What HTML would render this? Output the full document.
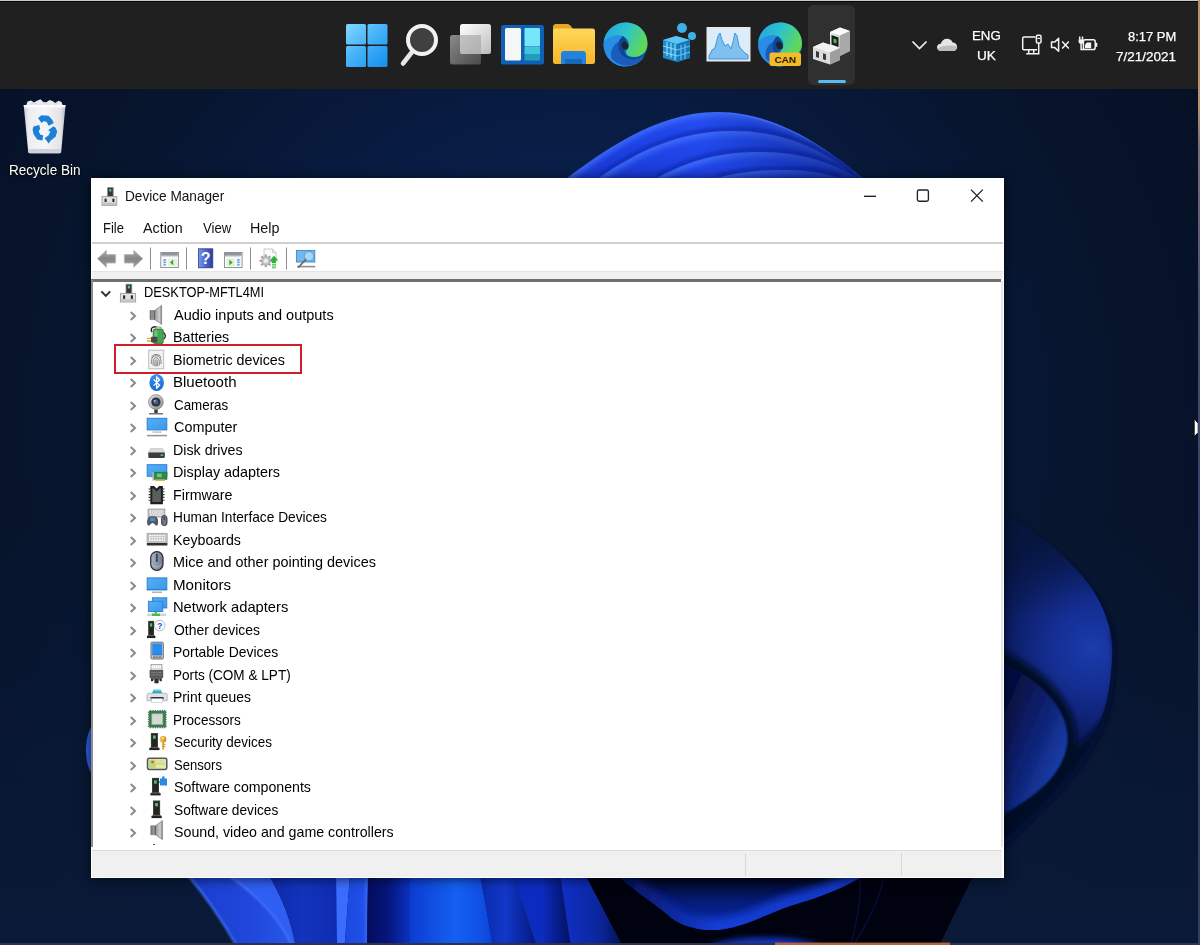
<!DOCTYPE html>
<html lang="en">
<head>
<meta charset="utf-8">
<title>Device Manager</title>
<style>
*{box-sizing:border-box;margin:0;padding:0}
html,body{width:1200px;height:945px;overflow:hidden;background:#06173a}
body{position:relative;font-family:"Liberation Sans",sans-serif;color:#000}
.abs{position:absolute}
.ft{position:absolute;line-height:1;white-space:nowrap;transform-origin:0 50%;z-index:5}
#wall{position:absolute;left:0;top:0;width:1200px;height:945px}
/* taskbar */
#taskbar{position:absolute;left:0;top:0;width:1200px;height:88.5px;background:#202020;border-top:1px solid #c8c8c8;box-shadow:inset 0 1px 0 #060606}
#activebtn{position:absolute;left:808px;top:4px;width:47px;height:80px;background:#303030;border-radius:6px}
#activeind{position:absolute;left:817.5px;top:78.5px;width:28px;height:3.5px;background:#56bdf2;border-radius:2px}
.tray{position:absolute;color:#fff;font-size:13.5px;white-space:nowrap;transform-origin:0 0}
/* desktop icon */
#rblabel{position:absolute;left:9px;top:160px;color:#fff;font-size:15px;white-space:nowrap;transform-origin:0 0;text-shadow:0 1px 2px rgba(0,0,0,.9)}
/* window */
#win{position:absolute;left:91px;top:178px;width:913px;height:700px;background:#fff;border:1px solid #fff;box-shadow:0 1px 10px 1px rgba(0,0,0,.55)}
#title{position:absolute;left:34px;top:9px;font-size:15px;white-space:nowrap;transform-origin:0 50%}
.menu{position:absolute;top:41px;font-size:14.5px;white-space:nowrap;transform-origin:0 50%}
#menuline{position:absolute;left:0;top:63.2px;width:911px;height:1.8px;background:#cfcfcf}
#tbband{position:absolute;left:0;top:92px;width:911px;height:9px;background:#f0f0f0;border-top:1px solid #e4e4e4}
#treetop{position:absolute;left:-1px;top:100.4px;width:910px;height:2.2px;background:#6f6f6f}
#treeleft{position:absolute;left:-1px;top:101px;width:2.4px;height:567px;background:#8c8c8c}
#treeright{position:absolute;left:909px;top:102px;width:1.5px;height:566px;background:#e6e6e6}
#status{position:absolute;left:0;top:671px;width:909.5px;height:26.6px;background:#f0f0f0;border-top:1px solid #dcdcdc}
.sdiv{position:absolute;top:2px;width:1px;height:23px;background:#d7d7d7}
.row{position:absolute;left:0;height:22px;width:600px}
.row .lbl{position:absolute;left:82px;top:0;height:22px;line-height:22px;font-size:14.5px;white-space:nowrap;transform-origin:0 50%;color:#000}
.row .chev{position:absolute;left:36px;top:5px;width:10px;height:12px}
.row .ico{position:absolute;left:55px;top:0;width:22px;height:22px;overflow:visible}
#hl{position:absolute;left:22.3px;top:165.3px;width:187.4px;height:30.1px;border:2.7px solid #cf1f2b}
</style>
</head>
<body>
<svg id="wall" viewBox="0 0 1200 945">
<defs>
<radialGradient id="bgG" gradientUnits="userSpaceOnUse" cx="570" cy="420" r="700"><stop offset="0" stop-color="#0c2556"/><stop offset="0.3" stop-color="#0a204c"/><stop offset="0.5" stop-color="#081a3e"/><stop offset="0.72" stop-color="#07152e"/><stop offset="1" stop-color="#061126"/></radialGradient>
</defs>
<rect width="1200" height="945" fill="url(#bgG)"/>
<linearGradient id="bgV" x1="0" y1="0" x2="0" y2="1"><stop offset="0" stop-color="#0b1f42" stop-opacity="0"/><stop offset="0.55" stop-color="#0b1f42" stop-opacity="0"/><stop offset="1" stop-color="#0a1c3c" stop-opacity="0.8"/></linearGradient>
<rect width="1200" height="945" fill="url(#bgV)"/>
<defs>
<filter id="b1" x="-20%" y="-20%" width="140%" height="140%"><feGaussianBlur stdDeviation="1"/></filter>
<filter id="b3" x="-20%" y="-20%" width="140%" height="140%"><feGaussianBlur stdDeviation="3"/></filter>
<filter id="b8" x="-30%" y="-30%" width="160%" height="160%"><feGaussianBlur stdDeviation="8"/></filter>
<filter id="b30" x="-50%" y="-50%" width="200%" height="200%"><feGaussianBlur stdDeviation="30"/></filter>
<linearGradient id="pt1" gradientUnits="userSpaceOnUse" x1="0" y1="111" x2="0" y2="180"><stop offset="0" stop-color="#2a54f4"/><stop offset="0.3" stop-color="#2046ea"/><stop offset="1" stop-color="#1836ce"/></linearGradient>
<linearGradient id="pt2" gradientUnits="userSpaceOnUse" x1="0" y1="130" x2="0" y2="180"><stop offset="0" stop-color="#2a54f4"/><stop offset="0.4" stop-color="#2046ea"/><stop offset="1" stop-color="#1938d2"/></linearGradient>
<linearGradient id="pt3" gradientUnits="userSpaceOnUse" x1="0" y1="151" x2="0" y2="180"><stop offset="0" stop-color="#2a54f4"/><stop offset="0.6" stop-color="#2046ea"/><stop offset="1" stop-color="#1b3cd8"/></linearGradient>
<linearGradient id="pt4" gradientUnits="userSpaceOnUse" x1="0" y1="169" x2="0" y2="182"><stop offset="0" stop-color="#2a54f4"/><stop offset="1" stop-color="#2046e6"/></linearGradient>
<linearGradient id="ptdark" gradientUnits="userSpaceOnUse" x1="700" y1="0" x2="870" y2="0"><stop offset="0" stop-color="#061a7a" stop-opacity="0"/><stop offset="1" stop-color="#05146a" stop-opacity="0.7"/></linearGradient>
<radialGradient id="bulge" gradientUnits="userSpaceOnUse" cx="1092" cy="648" r="118"><stop offset="0" stop-color="#1b3cac"/><stop offset="0.35" stop-color="#142e92"/><stop offset="0.75" stop-color="#0b1c62"/><stop offset="1" stop-color="#07144a"/></radialGradient>
<linearGradient id="bulgeTop" gradientUnits="userSpaceOnUse" x1="1010" y1="500" x2="1050" y2="610"><stop offset="0" stop-color="#061634" stop-opacity="0.95"/><stop offset="1" stop-color="#07193a" stop-opacity="0"/></linearGradient>
<linearGradient id="bulge2" gradientUnits="userSpaceOnUse" x1="1000" y1="715" x2="1068" y2="745"><stop offset="0" stop-color="#061040"/><stop offset="0.55" stop-color="#0c2274"/><stop offset="1" stop-color="#1a3ca6"/></linearGradient>
<linearGradient id="botA" gradientUnits="userSpaceOnUse" x1="180" y1="0" x2="980" y2="0">
<stop offset="0" stop-color="#1a3ed0"/><stop offset="0.1" stop-color="#2450e6"/><stop offset="0.135" stop-color="#2f60f4"/><stop offset="0.145" stop-color="#1030b4"/><stop offset="0.19" stop-color="#1030b8"/><stop offset="0.197" stop-color="#3a6cff"/><stop offset="0.21" stop-color="#3766fa"/><stop offset="0.215" stop-color="#1d4ce4"/><stop offset="0.235" stop-color="#1a46dc"/><stop offset="0.24" stop-color="#050f6c"/><stop offset="0.28" stop-color="#07188a"/><stop offset="0.33" stop-color="#0f48e0"/><stop offset="0.36" stop-color="#1258ee"/><stop offset="0.38" stop-color="#0e44dc"/><stop offset="0.385" stop-color="#0a2ab0"/><stop offset="0.41" stop-color="#1238c8"/><stop offset="0.425" stop-color="#061a84"/><stop offset="0.45" stop-color="#0c2cc0"/><stop offset="0.475" stop-color="#05126a"/><stop offset="0.49" stop-color="#1030c8"/><stop offset="0.52" stop-color="#0a249c"/><stop offset="0.55" stop-color="#020830"/><stop offset="1" stop-color="#00020f"/></linearGradient>
<linearGradient id="swG" gradientUnits="userSpaceOnUse" x1="760" y1="880" x2="775" y2="925"><stop offset="0" stop-color="#03104a"/><stop offset="0.6" stop-color="#0b2cb0"/><stop offset="1" stop-color="#1440e0"/></linearGradient>
</defs>
<!-- soft glow around bloom -->
<!-- top petals -->
<clipPath id="cp1"><path d="M560,184 L567,178 C600,154 655,112 717,112 C780,112 830,152 863,178 L870,184 Z"/></clipPath>
<path d="M560,184 L567,178 C600,154 655,112 717,112 C780,112 830,152 863,178 L870,184 Z" fill="url(#pt1)"/>
<g clip-path="url(#cp1)"><path d="M567,178 C600,154 655,112 717,112 C780,112 830,152 863,178" fill="none" stroke="#4d7dff" stroke-width="6" opacity="0.85" filter="url(#b3)"/></g>
<clipPath id="cp2"><path d="M590,184 L600,177 C640,150 680,131 733,131 C785,131 820,150 850,171 L862,184 Z"/></clipPath>
<path d="M600,177 C640,150 680,131 733,131 C785,131 820,150 850,171" fill="none" stroke="#0f28a8" stroke-width="5" opacity="0.5" filter="url(#b1)" transform="translate(0,-2)" clip-path="url(#cp1)"/>
<path d="M590,184 L600,177 C640,150 680,131 733,131 C785,131 820,150 850,171 L862,184 Z" fill="url(#pt2)"/>
<g clip-path="url(#cp2)"><path d="M600,177 C640,150 680,131 733,131 C785,131 820,150 850,171" fill="none" stroke="#4d7dff" stroke-width="6" opacity="0.85" filter="url(#b3)"/></g>
<clipPath id="cp3"><path d="M648,184 L657,178 C690,160 720,152 760,152 C800,152 830,162 856,177 L862,184 Z"/></clipPath>
<path d="M657,178 C690,160 720,152 760,152 C800,152 830,162 856,177" fill="none" stroke="#0f28a8" stroke-width="5" opacity="0.5" filter="url(#b1)" transform="translate(0,-2)" clip-path="url(#cp2)"/>
<path d="M648,184 L657,178 C690,160 720,152 760,152 C800,152 830,162 856,177 L862,184 Z" fill="url(#pt3)"/>
<g clip-path="url(#cp3)"><path d="M657,178 C690,160 720,152 760,152 C800,152 830,162 856,177" fill="none" stroke="#4d7dff" stroke-width="6" opacity="0.85" filter="url(#b3)"/></g>
<clipPath id="cp4"><path d="M708,184 L717,178 C740,172 760,170 783,170 C806,170 824,173 840,178 L846,184 Z"/></clipPath>
<path d="M717,178 C740,172 760,170 783,170 C806,170 824,173 840,178" fill="none" stroke="#0f28a8" stroke-width="5" opacity="0.5" filter="url(#b1)" transform="translate(0,-2)" clip-path="url(#cp3)"/>
<path d="M708,184 L717,178 C740,172 760,170 783,170 C806,170 824,173 840,178 L846,184 Z" fill="url(#pt4)"/>
<g clip-path="url(#cp4)"><path d="M717,178 C740,172 760,170 783,170 C806,170 824,173 840,178" fill="none" stroke="#4d7dff" stroke-width="6" opacity="0.85" filter="url(#b3)"/></g>
<path d="M700,184 L700,112 C780,112 830,152 863,178 L870,184 Z" fill="url(#ptdark)"/>
<!-- right bulge -->
<path d="M1000,511 C1025,525 1048,542 1063,556 C1082,574 1095,590 1102,607 C1110,625 1113,642 1112,658 C1111,680 1108,700 1102,717 C1095,735 1085,752 1072,768 C1058,786 1042,803 1025,819 C1018,826 1010,834 1000,842 Z" fill="#030a30" transform="translate(3,5)" filter="url(#b3)"/>
<path d="M1000,511 C1025,525 1048,542 1063,556 C1082,574 1095,590 1102,607 C1110,625 1113,642 1112,658 C1111,680 1108,700 1102,717 C1095,735 1085,752 1072,768 C1058,786 1042,803 1025,819 C1018,826 1010,834 1000,842 Z" fill="url(#bulge)"/>
<path d="M1000,511 C1025,525 1048,542 1063,556 C1082,574 1095,590 1102,607 C1110,625 1113,642 1112,658 C1111,680 1108,700 1102,717 C1095,735 1085,752 1072,768 C1058,786 1042,803 1025,819 C1018,826 1010,834 1000,842 Z" fill="url(#bulgeTop)"/>
<clipPath id="bulgeClip"><path d="M1000,511 C1025,525 1048,542 1063,556 C1082,574 1095,590 1102,607 C1110,625 1113,642 1112,658 C1111,680 1108,700 1102,717 C1095,735 1085,752 1072,768 C1058,786 1042,803 1025,819 C1018,826 1010,834 1000,842 Z"/></clipPath>
<g clip-path="url(#bulgeClip)">
<path d="M1000,858 C1050,820 1100,760 1118,700 C1124,670 1122,650 1118,630" fill="none" stroke="#050e44" stroke-width="14" filter="url(#b3)"/>
<path d="M1000,650 C1035,664 1082,700 1076,748 L1108,716 L1080,780 L1000,850 Z" fill="#030828" filter="url(#b3)"/>
<path d="M1000,662 C1035,676 1072,708 1067,745 C1062,778 1030,800 1000,816 Z" fill="url(#bulge2)" filter="url(#b1)"/>
</g>
<!-- left sliver -->
<ellipse cx="98" cy="750" rx="12" ry="28" fill="#2e5ee2"/>
<!-- bottom folds -->
<defs><linearGradient id="fA" x1="0" y1="0" x2="1" y2="0"><stop offset="0" stop-color="#1a3ccc"/><stop offset="0.6" stop-color="#2048dc"/><stop offset="1" stop-color="#2c5aee"/></linearGradient><linearGradient id="fC" x1="0" y1="0" x2="1" y2="0"><stop offset="0" stop-color="#0e2aa8"/><stop offset="0.5" stop-color="#1233bc"/><stop offset="1" stop-color="#0e2cb0"/></linearGradient><linearGradient id="fE" x1="0" y1="0" x2="1" y2="0"><stop offset="0" stop-color="#1c48e0"/><stop offset="0.8" stop-color="#2050e8"/><stop offset="1" stop-color="#3c6cfa"/></linearGradient><linearGradient id="fF" x1="0" y1="0" x2="1" y2="0"><stop offset="0" stop-color="#040c5c"/><stop offset="0.5" stop-color="#06167c"/><stop offset="1" stop-color="#0b32c0"/></linearGradient><linearGradient id="fG" x1="0" y1="0" x2="1" y2="0"><stop offset="0" stop-color="#0c3cd0"/><stop offset="0.55" stop-color="#1560f2"/><stop offset="0.9" stop-color="#0f4ce2"/><stop offset="1" stop-color="#0c40d4"/></linearGradient><linearGradient id="fH" x1="0" y1="0" x2="1" y2="0"><stop offset="0" stop-color="#0a2aae"/><stop offset="0.45" stop-color="#1238c8"/><stop offset="1" stop-color="#05167a"/></linearGradient><linearGradient id="fI" x1="0" y1="0" x2="1" y2="0"><stop offset="0" stop-color="#0b2cbc"/><stop offset="0.5" stop-color="#0c2cc0"/><stop offset="1" stop-color="#04105e"/></linearGradient><linearGradient id="fJ" x1="0" y1="0" x2="1" y2="0"><stop offset="0" stop-color="#1030c8"/><stop offset="0.6" stop-color="#0b279e"/><stop offset="1" stop-color="#041050"/></linearGradient></defs>
<path d="M187,874 C205,895 225,925 238,948 L300,948 L240,874 Z" fill="url(#fA)"/>
<path d="M226,874 C262,898 283,925 293,948 L296,948 C292,925 284,900 268,874 Z" fill="#2f5ef2"/>
<path d="M268,874 C284,900 292,925 296,948 L338,948 L336,874 Z" fill="url(#fC)"/>
<path d="M336,874 L350,874 L344.5,948 L337.1,948 Z" fill="#3a6cff"/>
<path d="M350,874 L368,874 L366.9,948 L344.5,948 Z" fill="url(#fE)"/>
<path d="M368,874 L410,874 L410.0,948 L366.9,948 Z" fill="url(#fF)"/>
<path d="M410,874 L480,874 L493.3,948 L410.0,948 Z" fill="url(#fG)"/>
<path d="M480,874 L512,874 L537.4,948 L493.3,948 Z" fill="url(#fH)"/>
<path d="M512,874 L560,874 L571.0,948 L537.4,948 Z" fill="url(#fI)"/>
<path d="M560,874 L585,874 L623.7,948 L571.0,948 Z" fill="url(#fJ)"/>
<path d="M187,874 C205,895 225,925 238,948" fill="none" stroke="#3d6cf2" stroke-width="2.2" filter="url(#b1)"/>
<path d="M226,874 C262,898 283,925 293,948" fill="none" stroke="#4a78ff" stroke-width="1.6" filter="url(#b1)"/>
<!-- dark right section with swoosh -->
<path d="M585,874 L623.7,948 L938,948 L974,874 Z" fill="#00020f"/>
<linearGradient id="swS" gradientUnits="userSpaceOnUse" x1="616" y1="0" x2="866" y2="0"><stop offset="0" stop-color="#04114e"/><stop offset="0.18" stop-color="#0a2490"/><stop offset="0.4" stop-color="#1640da"/><stop offset="1" stop-color="#1238c8"/></linearGradient>
<filter id="b5" x="-20%" y="-40%" width="140%" height="180%"><feGaussianBlur stdDeviation="4.5"/></filter>
<clipPath id="cU"><path d="M616,874 L866,874 C848,886 822,897 793,905 C765,914 740,930 713,930 C690,930 675,922 668,915 C650,900 630,888 616,874 Z"/></clipPath>
<linearGradient id="swG2" gradientUnits="userSpaceOnUse" x1="0" y1="878" x2="0" y2="932"><stop offset="0" stop-color="#01061e"/><stop offset="0.4" stop-color="#051a72"/><stop offset="1" stop-color="#0d30b8"/></linearGradient>
<path d="M616,874 L866,874 C848,886 822,897 793,905 C765,914 740,930 713,930 C690,930 675,922 668,915 C650,900 630,888 616,874 Z" fill="url(#swG2)"/>
<g clip-path="url(#cU)"><path d="M866,874 C848,886 822,897 793,905 C765,914 740,930 713,930 C690,930 675,922 668,915 C650,900 630,888 616,874" fill="none" stroke="url(#swS)" stroke-width="22" filter="url(#b5)" opacity="0.95"/></g>
<ellipse cx="765" cy="949" rx="55" ry="11" fill="#1238d0" filter="url(#b3)"/>
<path d="M860,876 C862,900 856,925 850,948 M884,876 C880,900 866,925 852,948" fill="none" stroke="#0a1c6a" stroke-width="1.5" opacity="0.45"/>
<!-- bottom strip -->
<rect x="0" y="943" width="1200" height="2" fill="#2c3350"/>
<rect x="775" y="942.6" width="175" height="2.4" fill="#b4643a"/>

</svg>

<div id="taskbar">
<div id="activebtn"></div>
<div id="activeind"></div>
<svg class="abs" style="left:0;top:-1px;width:1200px;height:88px" viewBox="0 0 1200 88">
<defs>
<linearGradient id="stG" gradientUnits="userSpaceOnUse" x1="346" y1="24" x2="388" y2="67"><stop offset="0" stop-color="#82d8ff"/><stop offset="0.45" stop-color="#48b4f8"/><stop offset="1" stop-color="#128cee"/></linearGradient>
<linearGradient id="tvF" x1="0" y1="0" x2="1" y2="1"><stop offset="0" stop-color="#ffffff"/><stop offset="1" stop-color="#bdbdbd"/></linearGradient>
<linearGradient id="tvB" x1="0" y1="0" x2="1" y2="1"><stop offset="0" stop-color="#8a8a8a"/><stop offset="1" stop-color="#4a4a4a"/></linearGradient>
<linearGradient id="fdG" x1="0" y1="0" x2="0" y2="1"><stop offset="0" stop-color="#ffd75a"/><stop offset="1" stop-color="#f7b62a"/></linearGradient>
<linearGradient id="edA" x1="0" y1="0" x2="1" y2="0.4"><stop offset="0" stop-color="#1fa0e8"/><stop offset="0.55" stop-color="#2fc4c8"/><stop offset="1" stop-color="#5fd85a"/></linearGradient>
<linearGradient id="edB" x1="0" y1="0" x2="0.6" y2="1"><stop offset="0" stop-color="#1b86dc"/><stop offset="1" stop-color="#0c4fa8"/></linearGradient>
<linearGradient id="dmG" x1="0" y1="0" x2="1" y2="1"><stop offset="0" stop-color="#f4f4f4"/><stop offset="1" stop-color="#9c9c9c"/></linearGradient>
<g id="edge">
<circle cx="0" cy="0" r="22" fill="url(#edB)"/>
<path d="M-21.8,-3 C-20,-14.5 -10.5,-22 0.5,-22 C13,-22 22,-12.5 22,-1 C22,8 15.5,12.5 8.5,12.5 C3,12.5 -0.5,9.5 0.5,6.5 C2.5,4.5 4,2 3,-2 C2,-6.5 -3,-9.5 -8.5,-8.5 C-14.5,-7.5 -19.5,-2.5 -21.8,-3 Z" fill="url(#edA)"/>
<path d="M-21.9,-1.5 C-22.5,10.5 -13.5,21.5 -1.5,22 C7,22.3 14.5,18.5 18.5,12.5 C10.5,17.5 0,15.5 -5,8.5 C-9,2.5 -7.5,-4.5 -2.5,-8.5 C-10,-11 -19,-7.5 -21.9,-1.5 Z" fill="#2a8de4"/>
<path d="M-14,14 C-8,21 2,23 10,19.5 C13.5,18 16.5,15.5 18.5,12.5 C10.5,17.5 0,15.5 -5,8.5 C-7.5,4.5 -8,0.5 -6.5,-3 C-12,0 -16,6 -14,14 Z" fill="#1a5cbc"/>
<path d="M-2.5,-8.5 C-7.5,-4.5 -9,2.5 -5,8.5 C-1,14.5 8,16.5 14,13.5 C6,15.5 -2.5,11.5 -1.5,4.5 C-0.5,0.5 1.5,-1.5 0.5,-4.5 C-0.5,-6.5 -1,-7.5 -2.5,-8.5 Z" fill="#0f4596"/>
<ellipse cx="-0.5" cy="1" rx="3.2" ry="4" fill="#1c2430" transform="rotate(-20 -0.5 1)"/>
</g>
</defs>
<!-- start -->
<rect x="346" y="24" width="20" height="20.5" rx="1.5" fill="url(#stG)"/>
<rect x="367.5" y="24" width="20" height="20.5" rx="1.5" fill="url(#stG)"/>
<rect x="346" y="46" width="20" height="21" rx="1.5" fill="url(#stG)"/>
<rect x="367.5" y="46" width="20" height="21" rx="1.5" fill="url(#stG)"/>
<!-- search -->
<line x1="412" y1="52" x2="403" y2="63.5" stroke="#e6e6e6" stroke-width="4.6" stroke-linecap="round"/>
<circle cx="422" cy="40" r="14" fill="#404040" stroke="#f2f2f2" stroke-width="4"/>
<!-- task view -->
<rect x="450" y="35" width="31" height="29.5" rx="2.5" fill="url(#tvB)"/>
<rect x="460" y="24" width="31" height="30" rx="2.5" fill="url(#tvF)"/>
<rect x="460" y="35" width="21" height="19" fill="#9a9a9a" opacity="0.55"/>
<!-- widgets -->
<rect x="501" y="25" width="43" height="39.5" rx="2.5" fill="#1160b8"/>
<rect x="505" y="28" width="16" height="32.5" rx="1.5" fill="#f4f6f8"/>
<rect x="524.5" y="28" width="15.5" height="18.5" rx="1" fill="#74e8f8"/>
<rect x="524.5" y="47" width="15.5" height="7.5" fill="#3cc6da"/>
<rect x="524.5" y="55" width="15.5" height="5.5" rx="1" fill="#1f9fba"/>
<!-- folder -->
<path d="M553,27 C553,25.3 554.3,24 556,24 L567,24 C568.5,24 569.5,24.6 570.5,25.8 L573,29 L553,34 Z" fill="#e9a520"/>
<rect x="553" y="28.5" width="42" height="35.5" rx="2.5" fill="url(#fdG)"/>
<path d="M561,64 L561,54 C561,52.3 562.3,51 564,51 L583,51 C584.7,51 586,52.3 586,54 L586,64 Z" fill="#2383dc"/>
<rect x="565" y="59" width="17" height="5" fill="#1668b8"/>
<!-- edge -->
<use href="#edge" x="625.5" y="44.5"/>
<!-- regedit -->
<g fill="#2ba0dc">
<path d="M663,40 L676,36 L690,40 L690,58 L677,62 L663,58 Z" fill="#1d8acc"/>
<path d="M663,40 L676,36 L690,40 L677,44 Z" fill="#5cc6f2"/>
<path d="M677,44 L690,40 L690,58 L677,62 Z" fill="#1678b8"/>
<circle cx="682" cy="28" r="5" fill="#3db0e8"/>
<circle cx="692" cy="36" r="4" fill="#3db0e8"/>
<path d="M667,42 v14 M671,43 v15 M675,44 v16 M663,46 l14,4 M663,52 l14,4" stroke="#8fd8f6" stroke-width="1.2" fill="none"/>
<path d="M681,45 v15 M685,44 v15 M677,50 l13,-4 M677,56 l13,-4" stroke="#66bfe8" stroke-width="1.2" fill="none"/>
</g>
<!-- perfmon -->
<rect x="707.5" y="28" width="42" height="32.5" fill="#dcecf8" stroke="#e8e8e8" stroke-width="2"/>
<path d="M709,56 L712,50 L715,48 L718,36 L720,33 L722,40 L725,46 L728,44 L731,49 L733,42 L735,33 L737,36 L739,46 L742,50 L745,53 L748,55 L748,59 L709,59 Z" fill="#7fc0ee" stroke="#3e96dc" stroke-width="1"/>
<!-- edge canary -->
<use href="#edge" x="780" y="44.5"/>
<rect x="769.5" y="52.5" width="31.5" height="13.5" rx="2.5" fill="#f4bc28"/>
<text x="774.4" y="63.3" font-family="Liberation Sans, sans-serif" font-weight="700" font-size="9.4" fill="#2a1c08" textLength="21.6" lengthAdjust="spacingAndGlyphs">CAN</text>
<!-- device manager -->
<path d="M830,32 L840,27.5 L850,31 L850,51 L840,56 L830,52 Z" fill="url(#dmG)"/>
<path d="M830,32 L840,27.5 L850,31 L840,35.5 Z" fill="#fafafa"/>
<path d="M840,35.5 L850,31 L850,51 L840,56 Z" fill="#a8a8a8"/>
<path d="M831.5,35 L838.5,37.5 L838.5,47 L831.5,44.5 Z" fill="#1c1c1c"/>
<path d="M833.5,38.5 L836.5,39.6 L836.5,43.5 L833.5,42.4 Z" fill="#3ec45a"/>
<path d="M813,47 L823,42.5 L840,48 L840,60 L830,64.5 L813,59 Z" fill="#dcdcdc"/>
<path d="M813,47 L823,42.5 L840,48 L830,52.5 Z" fill="#f2f2f2"/>
<path d="M830,52.5 L840,48 L840,60 L830,64.5 Z" fill="#9e9e9e"/>
<path d="M816,51 L819,52 L819,58 L816,57 Z M823,53.3 L826,54.3 L826,60.3 L823,59.3 Z" fill="#3a3a3a"/>
<!-- tray chevron -->
<path d="M912.5,41.5 L919.5,48.5 L926.5,41.5" fill="none" stroke="#f0f0f0" stroke-width="1.7"/>
<!-- onedrive cloud -->
<path d="M941,51 C938.5,51 937,49.3 937,47.3 C937,45.2 938.8,43.6 940.8,43.8 C941.5,40.8 944,38.8 947,38.8 C949.6,38.8 951.6,40.2 952.6,42.4 C955.2,42.4 957.2,44.4 957.2,46.8 C957.2,49.2 955.4,51 953,51 Z" fill="#e4e4e4"/>
<path d="M937.5,48.5 C941,46 947,44.5 957,46 C957,49 955.4,51 953,51 L941,51 C939.2,51 938,50 937.5,48.5 Z" fill="#bdbdbd"/>
<!-- network -->
<g fill="none" stroke="#f4f4f4" stroke-width="1.5">
<path d="M1037,49.7 H1024 C1023.2,49.7 1022.7,49.2 1022.7,48.4 V38.3 C1022.7,37.5 1023.2,37 1024,37 H1035.5"/>
<path d="M1028.7,49.7 V53.5 M1033.7,49.7 V53.5 M1026.2,53.7 H1039.5 M1038.7,43 V54.4"/>
<rect x="1036.4" y="35.3" width="4.6" height="7.7" rx="1.3" fill="#202020"/>
<path d="M1037.5,38.4 H1040" stroke-width="1.2"/>
</g>
<!-- volume muted -->
<g fill="none" stroke="#f4f4f4" stroke-width="1.5" stroke-linejoin="round">
<path d="M1051.5,42 H1054.8 L1058.6,38.2 V51.2 L1054.8,47.6 H1051.5 Z"/>
<path d="M1062.2,41.6 L1068.8,48.4 M1068.8,41.6 L1062.2,48.4"/>
</g>
<!-- battery charging -->
<g fill="none" stroke="#f4f4f4" stroke-width="1.5">
<rect x="1083.4" y="39.8" width="11.8" height="9.8" rx="1.8"/>
<path d="M1096.2,42.8 V46.8" stroke-width="2.2"/>
<path d="M1085,48.2 V44.6 L1087,42.4 H1091.2 V48.2 Z" fill="#f4f4f4" stroke="none"/>
<path d="M1079.7,36.4 V39.4 M1082.5,36.4 V39.4 M1081.1,43.6 V49.6 H1084" />
<path d="M1078.6,39.2 H1083.6 V41.6 C1083.6,43 1082.6,43.9 1081.1,43.9 C1079.6,43.9 1078.6,43 1078.6,41.6 Z" fill="#f4f4f4" stroke="none"/>
</g>
</svg>

</div>

<svg class="abs" style="left:14px;top:92px;width:62px;height:68px" viewBox="14 92 62 68">
<defs>
<linearGradient id="rbG" x1="0" y1="0" x2="1" y2="0"><stop offset="0" stop-color="#c9ccd2"/><stop offset="0.12" stop-color="#eceef1"/><stop offset="0.5" stop-color="#f4f5f7"/><stop offset="0.88" stop-color="#e2e4e8"/><stop offset="1" stop-color="#b9bcc4"/></linearGradient>
<filter id="rbb" x="-10%" y="-10%" width="120%" height="120%"><feGaussianBlur stdDeviation="0.5"/></filter>
</defs>
<g filter="url(#rbb)">
<path d="M26,106 L27.5,101.5 L31,100.5 L34,102.5 L37,100.8 L40.5,99.2 L43,101.8 L46,102.5 L49.5,100 L52.5,101 L55,103 L58.5,100.8 L61.5,102 L63,106 Z" fill="#e9ebee"/>
<path d="M31,104 L34,102.5 L37,104.5 M43,103 L46,102.5 L48,104.5 M55,104.5 L58,102.5" stroke="#c4c8cf" stroke-width="0.8" fill="none"/>
<path d="M23.7,105 L65.5,105 L61.2,152 C61.1,152.8 60.6,153.2 59.8,153.2 L29.6,153.2 C28.8,153.2 28.3,152.8 28.2,152 Z" fill="url(#rbG)"/>
<path d="M23.7,105 L65.5,105 L65.2,107.5 L24,107.5 Z" fill="#fafbfc"/>
<path d="M28.6,149 L60.9,149 L60.6,152 C60.5,152.8 60,153.2 59.2,153.2 L30.2,153.2 C29.4,153.2 28.9,152.8 28.8,152 Z" fill="#cfd2d8"/>
</g>
<g fill="#1b80d8" filter="url(#rbb)">
<path d="M38,118 L41.5,115.2 L48.5,115.8 L52,119.5 L53.8,123 L48.8,125.8 L46.5,121.8 L43.5,121.3 L41.5,123 Z"/>
<path d="M33.5,126.5 L39.2,125 L40.2,129 L38.6,131 L40.4,134.8 L43.2,135.2 L42.4,140.5 L37.2,139.5 L33.6,134.2 L32.6,129.5 Z"/>
<path d="M55.5,127.5 L57.2,131.5 L55.6,136.8 L50.8,140.6 L48.8,143.4 L44.6,138.2 L48.6,135.2 L50.4,131.8 L48.2,130.2 L53.2,126.4 Z"/>
</g>
</svg>


<div id="win">
<svg class="abs" style="left:8px;top:7px;width:20px;height:22px" viewBox="100 186 20 22">
<rect x="107.6" y="187.6" width="5.6" height="9.4" fill="#2d3a36" stroke="#8a8f8c" stroke-width="0.8"/>
<rect x="109.4" y="189" width="1.8" height="2.6" fill="#6fc78a"/>
<path d="M106,196 L108,194.5 L108,197 Z" fill="#9a9a9a"/>
<rect x="102" y="196.6" width="14.8" height="8.8" fill="#e3e3e3" stroke="#9c9c9c" stroke-width="0.9"/>
<rect x="102.4" y="202.6" width="14" height="2.6" fill="#c4c4c4"/>
<rect x="104.6" y="198.6" width="2" height="3.4" fill="#2a2a2a"/>
<rect x="112.4" y="198.6" width="2" height="3.4" fill="#2a2a2a"/>
</svg>

<svg class="abs" style="left:760px;top:5px;width:145px;height:24px" viewBox="852 184 145 24">
<g fill="none" stroke="#222" stroke-width="1.35">
<path d="M864,196.3 H876"/>
<rect x="917.4" y="190" width="11" height="11.2" rx="1.6"/>
<path d="M971,189.6 L982.8,201.6 M982.8,189.6 L971,201.6"/>
</g>
</svg>

<div id="menuline"></div>
<svg class="abs" style="left:0;top:66px;width:300px;height:26px" viewBox="92 245 300 26">
<defs>
<linearGradient id="arG" x1="0" y1="0" x2="0" y2="1"><stop offset="0" stop-color="#a8a8a8"/><stop offset="0.5" stop-color="#868686"/><stop offset="1" stop-color="#9a9a9a"/></linearGradient>
<linearGradient id="hpG" x1="0" y1="0" x2="1" y2="0"><stop offset="0" stop-color="#7c98ea"/><stop offset="0.5" stop-color="#4a66cc"/><stop offset="1" stop-color="#2a3f9c"/></linearGradient>
</defs>
<path d="M97.4,258.7 L106.4,250.4 L106.4,254.6 L115.6,254.6 L115.6,263 L106.4,263 L106.4,267.2 Z" fill="url(#arG)" stroke="#b4b4b4" stroke-width="0.9" stroke-linejoin="round"/>
<path d="M142.8,258.7 L133.8,250.4 L133.8,254.6 L124.4,254.6 L124.4,263 L133.8,263 L133.8,267.2 Z" fill="url(#arG)" stroke="#b4b4b4" stroke-width="0.9" stroke-linejoin="round"/>
<g stroke="#8e8e8e" stroke-width="1"><path d="M150.5,247.5 V269.5 M186.5,247.5 V269.5 M250.5,247.5 V269.5 M286.5,247.5 V269.5"/></g>
<!-- console tree icon -->
<rect x="160.8" y="252.5" width="17.6" height="15" fill="#fff" stroke="#8e949a" stroke-width="1"/>
<rect x="161.3" y="253" width="16.6" height="2.8" fill="#8f959b"/>
<rect x="161.3" y="255.8" width="16.6" height="1.4" fill="#d9dde2"/>
<rect x="162.6" y="258.6" width="4.2" height="7.6" fill="#e3edf8"/>
<path d="M163.6,260 h2.2 M163.6,262.4 h2.2 M163.6,264.8 h2.2" stroke="#4b8fd8" stroke-width="1.3"/>
<rect x="168.2" y="258.6" width="8.8" height="7.6" fill="#dff3d4"/>
<path d="M170,262.4 L173.2,259.6 L173.2,265.2 Z" fill="#3f9e3a"/>
<!-- help -->
<rect x="198.4" y="248.8" width="14.4" height="19" fill="url(#hpG)" stroke="#2b3c90" stroke-width="0.8"/>
<text x="205.6" y="264.2" font-family="Liberation Sans, sans-serif" font-weight="700" font-size="16" fill="#fff" text-anchor="middle">?</text>
<!-- action pane icon -->
<rect x="224.5" y="252.5" width="17.6" height="15" fill="#fff" stroke="#8e949a" stroke-width="1"/>
<rect x="225" y="253" width="16.6" height="2.8" fill="#8f959b"/>
<rect x="225" y="255.8" width="16.6" height="1.4" fill="#d9dde2"/>
<rect x="226.2" y="258.6" width="8.6" height="7.6" fill="#dff3d4"/>
<path d="M232.6,262.4 L229.4,259.6 L229.4,265.2 Z" fill="#3f9e3a"/>
<rect x="236.2" y="258.6" width="4.4" height="7.6" fill="#e3edf8"/>
<path d="M237.3,260 h2.2 M237.3,262.4 h2.2 M237.3,264.8 h2.2" stroke="#4b8fd8" stroke-width="1.3"/>
<!-- update driver -->
<path d="M264,249 L272.5,249 L276,252.5 L276,262 L264,262 Z" fill="#fbfbfb" stroke="#c2c2c2" stroke-width="0.9"/>
<path d="M272.5,249 L272.5,252.5 L276,252.5" fill="none" stroke="#c2c2c2" stroke-width="0.9"/>
<g transform="translate(265.8,260.8)">
<circle r="4.6" fill="#b4b4b4"/>
<g stroke="#a6a6a6" stroke-width="2.3"><path d="M0,-6.3 V6.3 M-6.3,0 H6.3 M-4.5,-4.5 L4.5,4.5 M-4.5,4.5 L4.5,-4.5"/></g>
<circle r="3.6" fill="#c9c9c9"/><circle r="1.9" fill="#f4f4f4"/>
</g>
<path d="M274,255.8 L278.4,260.6 L276,260.6 L276,263 L272,263 L272,260.6 L269.6,260.6 Z" fill="#2fb43a"/>
<path d="M272,264.2 h4 M272,266 h4 M272,267.8 h4" stroke="#35c040" stroke-width="1.1"/>
<!-- scan hardware -->
<rect x="296.4" y="250.4" width="18.4" height="11.6" fill="#6db9f0" stroke="#3f86c0" stroke-width="0.9"/>
<path d="M297,266.6 H315.2" stroke="#8c8c8c" stroke-width="1.6"/>
<circle cx="309" cy="256.2" r="4.7" fill="#a9d6f6" stroke="#5aa0d6" stroke-width="1"/>
<path d="M305.6,259.6 L298.8,267" stroke="#6a6a6a" stroke-width="1.8" stroke-linecap="round"/>
</svg>

<div id="tbband"></div>
<div id="treetop"></div>
<div id="treeright"></div>
<div id="treeleft"></div>
<div id="tree">
<div class="row" style="top:102.0px"><svg class="chev" style="left:8px;top:8.7px;width:12px;height:8px" viewBox="0 0 12 8"><path d="M1.4 1.4 L5.8 5.9 L10.2 1.4" fill="none" stroke="#2e2e2e" stroke-width="2"/></svg><svg class="ico" style="left:27px" viewBox="0 0 22 22"><defs>
<linearGradient id="spk" x1="0" y1="0" x2="1" y2="0"><stop offset="0" stop-color="#6c6c6c"/><stop offset="0.35" stop-color="#8e8e8e"/><stop offset="0.8" stop-color="#cfcfcf"/><stop offset="1" stop-color="#a0a0a0"/></linearGradient>
<linearGradient id="monB" x1="0" y1="0" x2="1" y2="1"><stop offset="0" stop-color="#55b0f6"/><stop offset="1" stop-color="#3a98ea"/></linearGradient>
<linearGradient id="camG" x1="0" y1="0" x2="1" y2="1"><stop offset="0" stop-color="#e4e4e4"/><stop offset="1" stop-color="#8c8c8c"/></linearGradient>
<linearGradient id="btG" x1="0" y1="0" x2="0" y2="1"><stop offset="0" stop-color="#3a92f0"/><stop offset="1" stop-color="#1668d0"/></linearGradient>
<linearGradient id="msG" x1="0" y1="0" x2="1" y2="0"><stop offset="0" stop-color="#a8b4c4"/><stop offset="1" stop-color="#6c7a90"/></linearGradient>
<linearGradient id="keyG" x1="0" y1="0" x2="1" y2="0"><stop offset="0" stop-color="#f4cc5a"/><stop offset="1" stop-color="#c88a18"/></linearGradient>
<g id="tower"><rect x="0" y="0" width="7" height="15" fill="#242424"/><rect x="0.6" y="0.6" width="5.8" height="13.8" fill="none" stroke="#4a4a4a" stroke-width="0.6"/><rect x="2" y="2.4" width="2.8" height="3.4" fill="#4fc06a"/><rect x="-1.6" y="15.2" width="10.2" height="2.3" fill="#1e1e1e"/><rect x="-0.8" y="14.6" width="8.6" height="0.9" fill="#5a5a5a"/></g>
<g id="mon"><rect x="0.5" y="0.5" width="19.6" height="11.6" fill="url(#monB)" stroke="#2c7fd0" stroke-width="1"/></g>
</defs><rect x="7" y="3.2" width="5.8" height="9.6" fill="#2d3a36" stroke="#8a8f8c" stroke-width="0.8"/><rect x="8.9" y="4.8" width="1.9" height="2.6" fill="#6fc78a"/><rect x="1.4" y="12.4" width="15.2" height="8.6" fill="#e3e3e3" stroke="#9c9c9c" stroke-width="0.9"/><rect x="1.8" y="18" width="14.4" height="2.6" fill="#c6c6c6"/><rect x="4" y="14.4" width="2.2" height="3.4" fill="#2a2a2a"/><rect x="11.8" y="14.4" width="2.2" height="3.4" fill="#2a2a2a"/></svg><span class="lbl" style="left:51.7px;transform:scaleX(0.8838)">DESKTOP-MFTL4MI</span></div>
<div class="row" style="top:124.5px"><svg class="chev" style="left:36.5px;top:6px;width:8px;height:11px" viewBox="0 0 8 11"><path d="M1.7 1.9 L6 5.9 L1.7 9.9" fill="none" stroke="#8a8a8a" stroke-width="2"/></svg><svg class="ico" style="left:54px" viewBox="0 0 22 22"><path d="M4,6.6 L8.6,6.6 L15.6,1.5 L15.6,20.3 L8.6,15.6 L4,15.6 Z" fill="url(#spk)" stroke="#6e6e6e" stroke-width="0.6"/><path d="M8.6,6.6 V15.6" stroke="#565656" stroke-width="0.9"/><path d="M5.4,6.6 V15.6 M6.9,6.6 V15.6" stroke="#a4a4a4" stroke-width="0.6"/><path d="M15.2,1.5 V20.3" stroke="#8a8a8a" stroke-width="0.8"/></svg><span class="lbl" style="left:81.6px;transform:scaleX(1.0002)">Audio inputs and outputs</span></div>
<div class="row" style="top:147.0px"><svg class="chev" style="left:36.5px;top:6px;width:8px;height:11px" viewBox="0 0 8 11"><path d="M1.7 1.9 L6 5.9 L1.7 9.9" fill="none" stroke="#8a8a8a" stroke-width="2"/></svg><svg class="ico" style="left:54px" viewBox="0 0 22 22"><path d="M6,6 C3,2 9,-1 12,2.5 M17,6 C20,8 20,12 17.5,13" fill="none" stroke="#222" stroke-width="1.4"/><rect x="9.5" y="1" width="5.5" height="2.6" fill="#cfd8cf" stroke="#5a6a5a" stroke-width="0.5"/><rect x="7.2" y="3.2" width="10" height="14.2" rx="1.2" fill="#43a850" stroke="#2a6a34" stroke-width="0.8"/><rect x="8.4" y="4.4" width="3" height="11.8" fill="#7fd088" opacity="0.7"/><rect x="5" y="10.8" width="6.5" height="5.6" rx="0.8" fill="#4a4a4a"/><path d="M0.8,12.3 H5 M0.8,15 H5" stroke="#d8b040" stroke-width="1.3"/></svg><span class="lbl" style="left:80.6px;transform:scaleX(0.9826)">Batteries</span></div>
<div class="row" style="top:169.5px"><svg class="chev" style="left:36.5px;top:6px;width:8px;height:11px" viewBox="0 0 8 11"><path d="M1.7 1.9 L6 5.9 L1.7 9.9" fill="none" stroke="#8a8a8a" stroke-width="2"/></svg><svg class="ico" style="left:54px" viewBox="0 0 22 22"><rect x="2.7" y="1.2" width="15" height="18.6" fill="#f1f3f1" stroke="#b4b8b4" stroke-width="0.9"/><g fill="none" stroke="#6a6a6a" stroke-width="0.85"><path d="M5.6,8.5 C6.5,4.5 14,4.5 14.8,8.5"/><path d="M5.4,15 C5,10 6.5,6.8 10.2,6.8 C14,6.8 15.3,10 15,15"/><path d="M7.2,16.6 C6.6,12 7.6,8.8 10.2,8.8 C12.9,8.8 13.7,12 13.2,16.6"/><path d="M8.9,17.2 C8.5,13 9,10.8 10.2,10.8 C11.5,10.8 11.9,13 11.5,17.2"/><path d="M10.2,12.6 V17.4"/></g></svg><span class="lbl" style="left:80.6px;transform:scaleX(0.9851)">Biometric devices</span></div>
<div class="row" style="top:192.0px"><svg class="chev" style="left:36.5px;top:6px;width:8px;height:11px" viewBox="0 0 8 11"><path d="M1.7 1.9 L6 5.9 L1.7 9.9" fill="none" stroke="#8a8a8a" stroke-width="2"/></svg><svg class="ico" style="left:54px" viewBox="0 0 22 22"><ellipse cx="10.7" cy="11.5" rx="7.3" ry="8.6" fill="url(#btG)"/><path d="M7.6,8.4 L13.6,14.3 L10.6,17.2 L10.6,5.8 L13.6,8.7 L7.6,14.6" fill="none" stroke="#fff" stroke-width="1.3" stroke-linejoin="round"/></svg><span class="lbl" style="left:80.6px;transform:scaleX(1.0364)">Bluetooth</span></div>
<div class="row" style="top:214.5px"><svg class="chev" style="left:36.5px;top:6px;width:8px;height:11px" viewBox="0 0 8 11"><path d="M1.7 1.9 L6 5.9 L1.7 9.9" fill="none" stroke="#8a8a8a" stroke-width="2"/></svg><svg class="ico" style="left:54px" viewBox="0 0 22 22"><rect x="8.3" y="15.2" width="3.4" height="3.8" fill="#3a3a3a"/><path d="M3,19.8 H17" stroke="#6a6a6a" stroke-width="1.4"/><circle cx="9.9" cy="8" r="7.4" fill="url(#camG)" stroke="#7e7e7e" stroke-width="0.7"/><circle cx="9.9" cy="8" r="4.6" fill="#2b3140"/><circle cx="9.9" cy="8" r="2.6" fill="#4a5a7a"/><circle cx="8.8" cy="6.9" r="1.1" fill="#9fb4d8"/></svg><span class="lbl" style="left:81.6px;transform:scaleX(0.922)">Cameras</span></div>
<div class="row" style="top:237.0px"><svg class="chev" style="left:36.5px;top:6px;width:8px;height:11px" viewBox="0 0 8 11"><path d="M1.7 1.9 L6 5.9 L1.7 9.9" fill="none" stroke="#8a8a8a" stroke-width="2"/></svg><svg class="ico" style="left:54px" viewBox="0 0 22 22"><use href="#mon" x="0.7" y="1.8"/><rect x="6.5" y="15.2" width="9" height="1.8" fill="#c9ced4"/><path d="M1,19.6 H21" stroke="#8e959c" stroke-width="1.5"/></svg><span class="lbl" style="left:81.6px;transform:scaleX(0.9932)">Computer</span></div>
<div class="row" style="top:259.5px"><svg class="chev" style="left:36.5px;top:6px;width:8px;height:11px" viewBox="0 0 8 11"><path d="M1.7 1.9 L6 5.9 L1.7 9.9" fill="none" stroke="#8a8a8a" stroke-width="2"/></svg><svg class="ico" style="left:54px" viewBox="0 0 22 22"><path d="M4.5,9.6 H16.6 L18.8,13.6 H2.3 Z" fill="#dcdcdc" stroke="#b0b0b0" stroke-width="0.5"/><rect x="2.3" y="13.5" width="16.5" height="5.4" rx="0.8" fill="#3c3c3c"/><rect x="14.6" y="15.4" width="2.6" height="1.5" fill="#58d060"/></svg><span class="lbl" style="left:80.6px;transform:scaleX(0.9821)">Disk drives</span></div>
<div class="row" style="top:282.0px"><svg class="chev" style="left:36.5px;top:6px;width:8px;height:11px" viewBox="0 0 8 11"><path d="M1.7 1.9 L6 5.9 L1.7 9.9" fill="none" stroke="#8a8a8a" stroke-width="2"/></svg><svg class="ico" style="left:54px" viewBox="0 0 22 22"><use href="#mon" x="0.7" y="3.2"/><rect x="5" y="15.3" width="4" height="1.2" fill="#9aa0a8"/><rect x="7.6" y="11.2" width="13.4" height="7.2" fill="#2f8a4a" stroke="#1f6a36" stroke-width="0.6"/><rect x="11" y="12.6" width="4.6" height="3.6" fill="#79c088"/><path d="M9,19.3 H19" stroke="#e0b840" stroke-width="1.6"/><rect x="6.4" y="11" width="1.5" height="8.8" fill="#b8b8b8"/></svg><span class="lbl" style="left:80.6px;transform:scaleX(0.9902)">Display adapters</span></div>
<div class="row" style="top:304.5px"><svg class="chev" style="left:36.5px;top:6px;width:8px;height:11px" viewBox="0 0 8 11"><path d="M1.7 1.9 L6 5.9 L1.7 9.9" fill="none" stroke="#8a8a8a" stroke-width="2"/></svg><svg class="ico" style="left:54px" viewBox="0 0 22 22"><g stroke="#2a2a2a" stroke-width="1.1"><path d="M2.6,5 H4.5 M2.6,7.8 H4.5 M2.6,10.6 H4.5 M2.6,13.4 H4.5 M2.6,16.2 H4.5 M16.6,5 H18.5 M16.6,7.8 H18.5 M16.6,10.6 H18.5 M16.6,13.4 H18.5 M16.6,16.2 H18.5"/></g><path d="M4.3,2 H8 L10.6,4.6 L13.2,2 H16.9 V20.2 H4.3 Z" fill="#1e1e1e"/><path d="M6.3,4.6 H7.6 L10.6,7.4 L13.6,4.6 H14.9 V18 H6.3 Z" fill="#5c5c5c"/></svg><span class="lbl" style="left:80.6px;transform:scaleX(0.984)">Firmware</span></div>
<div class="row" style="top:327.0px"><svg class="chev" style="left:36.5px;top:6px;width:8px;height:11px" viewBox="0 0 8 11"><path d="M1.7 1.9 L6 5.9 L1.7 9.9" fill="none" stroke="#8a8a8a" stroke-width="2"/></svg><svg class="ico" style="left:54px" viewBox="0 0 22 22"><rect x="2" y="3" width="17" height="8" fill="#c4c4c4" stroke="#8a8a8a" stroke-width="0.6"/><path d="M3.5,5 H17.5 M3.5,7 H17.5 M4.5,9 H16.5" stroke="#fff" stroke-width="1.1" stroke-dasharray="1.5 0.7"/><path d="M2.6,11 C0.6,13 0.6,19.6 2.6,19.8 C4,19.8 4.6,17 6.6,17 C8.6,17 9.2,19.8 10.6,19.8 C12.6,19.6 12.6,13 10.6,11 C9,10 4.2,10 2.6,11 Z" fill="#585858"/><rect x="4.2" y="11.6" width="4.8" height="3.6" fill="#3a90e0"/><rect x="15.6" y="9.6" width="5.4" height="10" rx="2.6" fill="#6e7888" stroke="#2e2e2e" stroke-width="0.9"/><path d="M18.3,11 V14" stroke="#2a2a2a" stroke-width="0.9"/></svg><span class="lbl" style="left:80.7px;transform:scaleX(0.9453)">Human Interface Devices</span></div>
<div class="row" style="top:349.5px"><svg class="chev" style="left:36.5px;top:6px;width:8px;height:11px" viewBox="0 0 8 11"><path d="M1.7 1.9 L6 5.9 L1.7 9.9" fill="none" stroke="#8a8a8a" stroke-width="2"/></svg><svg class="ico" style="left:54px" viewBox="0 0 22 22"><rect x="1" y="4.2" width="20.2" height="12" fill="#c0c0c0" stroke="#9a9a9a" stroke-width="0.6"/><rect x="1" y="14" width="20.2" height="2.3" fill="#303030"/><path d="M3,6.6 H19.2 M3,8.9 H19.2 M3,11.2 H19.2" stroke="#fff" stroke-width="1.4" stroke-dasharray="1.8 0.7"/></svg><span class="lbl" style="left:80.6px;transform:scaleX(0.9799)">Keyboards</span></div>
<div class="row" style="top:372.0px"><svg class="chev" style="left:36.5px;top:6px;width:8px;height:11px" viewBox="0 0 8 11"><path d="M1.7 1.9 L6 5.9 L1.7 9.9" fill="none" stroke="#8a8a8a" stroke-width="2"/></svg><svg class="ico" style="left:54px" viewBox="0 0 22 22"><rect x="4.7" y="0.6" width="12.3" height="18.7" rx="6" fill="url(#msG)" stroke="#2c2c2c" stroke-width="1.2"/><path d="M10.85,3.4 V10.2" stroke="#3a4454" stroke-width="1.8" stroke-linecap="round"/><path d="M6.8,13 C8,17 13.6,17 15,13" fill="none" stroke="#b8c2d0" stroke-width="0.7"/></svg><span class="lbl" style="left:80.6px;transform:scaleX(0.9952)">Mice and other pointing devices</span></div>
<div class="row" style="top:394.5px"><svg class="chev" style="left:36.5px;top:6px;width:8px;height:11px" viewBox="0 0 8 11"><path d="M1.7 1.9 L6 5.9 L1.7 9.9" fill="none" stroke="#8a8a8a" stroke-width="2"/></svg><svg class="ico" style="left:54px" viewBox="0 0 22 22"><use href="#mon" x="0.7" y="3.4" transform="translate(0,0)"/><rect x="0.7" y="15.4" width="20.6" height="1" fill="#2c7fd0"/><path d="M6,18.2 H16" stroke="#9aa2aa" stroke-width="1.2"/></svg><span class="lbl" style="left:80.6px;transform:scaleX(1.0432)">Monitors</span></div>
<div class="row" style="top:417.0px"><svg class="chev" style="left:36.5px;top:6px;width:8px;height:11px" viewBox="0 0 8 11"><path d="M1.7 1.9 L6 5.9 L1.7 9.9" fill="none" stroke="#8a8a8a" stroke-width="2"/></svg><svg class="ico" style="left:54px" viewBox="0 0 22 22"><rect x="6.4" y="1.8" width="14.4" height="10.2" fill="url(#monB)" stroke="#2c7fd0" stroke-width="0.9"/><rect x="2.4" y="5.3" width="14.4" height="10.2" fill="url(#monB)" stroke="#2c7fd0" stroke-width="0.9"/><rect x="8.6" y="15.8" width="2.4" height="2" fill="#48b050"/><rect x="1" y="17.6" width="19.4" height="2.4" fill="#cfd4d8"/><rect x="6" y="17.6" width="8" height="2.4" fill="#4cb854"/></svg><span class="lbl" style="left:80.6px;transform:scaleX(1.0144)">Network adapters</span></div>
<div class="row" style="top:439.5px"><svg class="chev" style="left:36.5px;top:6px;width:8px;height:11px" viewBox="0 0 8 11"><path d="M1.7 1.9 L6 5.9 L1.7 9.9" fill="none" stroke="#8a8a8a" stroke-width="2"/></svg><svg class="ico" style="left:54px" viewBox="0 0 22 22"><g transform="translate(2.3,1.9) scale(0.82,0.98)"><use href="#tower"/></g><circle cx="13.7" cy="6.5" r="5.3" fill="#fafcff" stroke="#a8aeb8" stroke-width="0.9"/><text x="13.7" y="9.8" font-family="Liberation Sans, sans-serif" font-weight="700" font-size="9" fill="#2a62c8" text-anchor="middle">?</text></svg><span class="lbl" style="left:81.6px;transform:scaleX(0.9607)">Other devices</span></div>
<div class="row" style="top:462.0px"><svg class="chev" style="left:36.5px;top:6px;width:8px;height:11px" viewBox="0 0 8 11"><path d="M1.7 1.9 L6 5.9 L1.7 9.9" fill="none" stroke="#8a8a8a" stroke-width="2"/></svg><svg class="ico" style="left:54px" viewBox="0 0 22 22"><rect x="5" y="1.2" width="12.3" height="16.8" rx="1" fill="#c8ccd0" stroke="#5a6068" stroke-width="0.9"/><rect x="6.2" y="2.4" width="9.9" height="11.6" fill="#2b8dea"/><path d="M6.2,14 H16.1" stroke="#1a60b0" stroke-width="0.6"/><path d="M7,16.1 H9.6 M10.2,16.1 H12.2 M12.8,16.1 H15.4" stroke="#5a6068" stroke-width="1.3"/></svg><span class="lbl" style="left:80.6px;transform:scaleX(0.9598)">Portable Devices</span></div>
<div class="row" style="top:484.5px"><svg class="chev" style="left:36.5px;top:6px;width:8px;height:11px" viewBox="0 0 8 11"><path d="M1.7 1.9 L6 5.9 L1.7 9.9" fill="none" stroke="#8a8a8a" stroke-width="2"/></svg><svg class="ico" style="left:54px" viewBox="0 0 22 22"><rect x="5" y="0.4" width="11" height="5.8" fill="#e0e0e0" stroke="#8e8e8e" stroke-width="0.7"/><path d="M6.4,1.4 V4 M8.4,1.4 V4 M10.4,1.4 V4 M12.4,1.4 V4 M14.4,1.4 V4" stroke="#fff" stroke-width="1.1"/><path d="M3.6,6 H17.2 V13.6 L14.8,15.4 H6 L3.6,13.6 Z" fill="#5a5a5a"/><path d="M5,8.4 H15.8 M5,10.8 H15.8" stroke="#7e7e7e" stroke-width="0.9"/><rect x="5" y="15" width="2.2" height="2.2" fill="#2a2a2a"/><rect x="13.6" y="15" width="2.2" height="2.2" fill="#2a2a2a"/><rect x="8.4" y="15" width="4.2" height="4.3" fill="#2e2e2e"/></svg><span class="lbl" style="left:80.7px;transform:scaleX(0.9366)">Ports (COM &amp; LPT)</span></div>
<div class="row" style="top:507.0px"><svg class="chev" style="left:36.5px;top:6px;width:8px;height:11px" viewBox="0 0 8 11"><path d="M1.7 1.9 L6 5.9 L1.7 9.9" fill="none" stroke="#8a8a8a" stroke-width="2"/></svg><svg class="ico" style="left:54px" viewBox="0 0 22 22"><path d="M6,7.6 L7.4,3.8 H14.8 L16.2,7.6 Z" fill="#2aa4cc"/><path d="M7.4,3.8 H14.8 L15.3,5.2 H6.9 Z" fill="#5cd0e8"/><path d="M2.6,7.2 H19.6 C20.6,7.2 21.2,7.9 21.2,8.8 V14.8 H1 V8.8 C1,7.9 1.6,7.2 2.6,7.2 Z" fill="#dfe2e6" stroke="#8e98a4" stroke-width="0.6"/><rect x="4.6" y="11" width="13" height="2.4" fill="#2e3238"/><rect x="5.6" y="12.6" width="11" height="4" fill="#fff" stroke="#b0b4b8" stroke-width="0.5"/></svg><span class="lbl" style="left:80.6px;transform:scaleX(0.9568)">Print queues</span></div>
<div class="row" style="top:529.5px"><svg class="chev" style="left:36.5px;top:6px;width:8px;height:11px" viewBox="0 0 8 11"><path d="M1.7 1.9 L6 5.9 L1.7 9.9" fill="none" stroke="#8a8a8a" stroke-width="2"/></svg><svg class="ico" style="left:54px" viewBox="0 0 22 22"><g stroke="#2f6a40" stroke-width="1"><path d="M4.6,0.9 V19.3 M7,0.9 V19.3 M9.4,0.9 V19.3 M11.8,0.9 V19.3 M14.2,0.9 V19.3 M16.6,0.9 V19.3 M18.8,0.9 V19.3 M1.9,3.2 H20.7 M1.9,5.6 H20.7 M1.9,8 H20.7 M1.9,10.4 H20.7 M1.9,12.8 H20.7 M1.9,15.2 H20.7 M1.9,17.4 H20.7"/></g><rect x="2.8" y="1.8" width="17" height="16.6" fill="#3a7c4c"/><rect x="5.8" y="4.8" width="11" height="10.8" fill="#d6d8d6" stroke="#9aa49a" stroke-width="0.7"/></svg><span class="lbl" style="left:80.7px;transform:scaleX(0.9359)">Processors</span></div>
<div class="row" style="top:552.0px"><svg class="chev" style="left:36.5px;top:6px;width:8px;height:11px" viewBox="0 0 8 11"><path d="M1.7 1.9 L6 5.9 L1.7 9.9" fill="none" stroke="#8a8a8a" stroke-width="2"/></svg><svg class="ico" style="left:54px" viewBox="0 0 22 22"><use href="#tower" x="4.9" y="2.2" transform="scale(1,0.97)"/><circle cx="17" cy="8.4" r="3.3" fill="url(#keyG)"/><circle cx="17" cy="7.2" r="0.9" fill="#fff6d8"/><path d="M16,11 H18 V17.6 L17,19.2 L16,17.6 Z" fill="url(#keyG)"/><path d="M18,13.4 H19.4 M18,15.6 H19.4" stroke="#c88a18" stroke-width="1"/></svg><span class="lbl" style="left:81.6px;transform:scaleX(0.9276)">Security devices</span></div>
<div class="row" style="top:574.5px"><svg class="chev" style="left:36.5px;top:6px;width:8px;height:11px" viewBox="0 0 8 11"><path d="M1.7 1.9 L6 5.9 L1.7 9.9" fill="none" stroke="#8a8a8a" stroke-width="2"/></svg><svg class="ico" style="left:54px" viewBox="0 0 22 22"><rect x="1.5" y="4.2" width="19.3" height="11.2" rx="1.8" fill="#dfeab0" stroke="#565656" stroke-width="1.5"/><rect x="3.2" y="5.8" width="5.6" height="8" fill="#b4d88a"/><path d="M9,5.6 V14 M9,10 H19" stroke="#e8c040" stroke-width="1.1"/><rect x="11" y="6" width="7" height="3" fill="#cfe6a0"/><circle cx="6.5" cy="8" r="1.3" fill="#e05040"/></svg><span class="lbl" style="left:81.6px;transform:scaleX(0.901)">Sensors</span></div>
<div class="row" style="top:597.0px"><svg class="chev" style="left:36.5px;top:6px;width:8px;height:11px" viewBox="0 0 8 11"><path d="M1.7 1.9 L6 5.9 L1.7 9.9" fill="none" stroke="#8a8a8a" stroke-width="2"/></svg><svg class="ico" style="left:54px" viewBox="0 0 22 22"><use href="#tower" x="6" y="1.9"/><path d="M14,2.6 H16.2 V1.2 C16.2,-0.2 18.6,-0.2 18.6,1.2 V2.6 H21 V9.6 H14 V7.2 C12.6,7.2 12.6,4.9 14,4.9 Z" fill="#2c88e4"/></svg><span class="lbl" style="left:81.6px;transform:scaleX(0.9765)">Software components</span></div>
<div class="row" style="top:619.5px"><svg class="chev" style="left:36.5px;top:6px;width:8px;height:11px" viewBox="0 0 8 11"><path d="M1.7 1.9 L6 5.9 L1.7 9.9" fill="none" stroke="#8a8a8a" stroke-width="2"/></svg><svg class="ico" style="left:54px" viewBox="0 0 22 22"><use href="#tower" x="7.1" y="1.6"/></svg><span class="lbl" style="left:81.6px;transform:scaleX(0.944)">Software devices</span></div>
<div class="row" style="top:642.0px"><svg class="chev" style="left:36.5px;top:6px;width:8px;height:11px" viewBox="0 0 8 11"><path d="M1.7 1.9 L6 5.9 L1.7 9.9" fill="none" stroke="#8a8a8a" stroke-width="2"/></svg><svg class="ico" style="left:54px" viewBox="0 0 22 22"><g transform="translate(0.8,-1.8)"><path d="M4,6.6 L8.6,6.6 L15.6,1.5 L15.6,20.3 L8.6,15.6 L4,15.6 Z" fill="url(#spk)" stroke="#6e6e6e" stroke-width="0.6"/><path d="M8.6,6.6 V15.6" stroke="#565656" stroke-width="0.9"/><path d="M5.4,6.6 V15.6 M6.9,6.6 V15.6" stroke="#a4a4a4" stroke-width="0.6"/><path d="M15.2,1.5 V20.3" stroke="#8a8a8a" stroke-width="0.8"/></g></svg><span class="lbl" style="left:81.6px;transform:scaleX(0.9802)">Sound, video and game controllers</span></div>
</div>
<div class="abs" style="left:60.5px;top:664.6px;width:2px;height:1px;background:#555"></div>
<div id="hl"></div>
<div id="status"><div class="sdiv" style="left:653px"></div><div class="sdiv" style="left:809px"></div></div>
</div>
<div class="abs" style="left:1198px;top:0;width:2px;height:945px;z-index:9;background:linear-gradient(to bottom,#b8946e 0,#b8946e 105px,#7a6c7c 150px,#4a5070 300px,#3a4468 500px,#333c5c 945px)"></div>
<svg class="abs" style="left:1190px;top:416px;width:9px;height:23px;z-index:8" viewBox="1190 416 9 23"><path d="M1194.2,418.6 L1198.2,423.4 L1198.2,432.6 L1194.2,436.6 Z" fill="#fff" stroke="#000" stroke-width="0.9"/></svg>
<div class="ft" style="left:124.9px;top:189.0px;font-size:14.5px;color:#111;font-weight:400;transform:scaleX(0.9394);">Device Manager</div>
<div class="ft" style="left:102.8px;top:221.2px;font-size:14.5px;color:#111;font-weight:400;transform:scaleX(0.8969);">File</div>
<div class="ft" style="left:143.3px;top:221.2px;font-size:14.5px;color:#111;font-weight:400;transform:scaleX(0.9867);">Action</div>
<div class="ft" style="left:203.0px;top:221.2px;font-size:14.5px;color:#111;font-weight:400;transform:scaleX(0.9055);">View</div>
<div class="ft" style="left:250.3px;top:221.2px;font-size:14.5px;color:#111;font-weight:400;transform:scaleX(0.9876);">Help</div>
<div class="ft" style="left:972.3px;top:29.2px;font-size:13.5px;color:#fff;font-weight:400;transform:scaleX(0.9801);-webkit-text-stroke:0.25px #fff;">ENG</div>
<div class="ft" style="left:977.1px;top:49.4px;font-size:13.5px;color:#fff;font-weight:400;transform:scaleX(1.0085);-webkit-text-stroke:0.25px #fff;">UK</div>
<div class="ft" style="left:1127.5px;top:29.9px;font-size:13.5px;color:#fff;font-weight:400;transform:scaleX(0.9594);-webkit-text-stroke:0.25px #fff;">8:17 PM</div>
<div class="ft" style="left:1116.0px;top:49.6px;font-size:13.5px;color:#fff;font-weight:400;transform:scaleX(0.9992);-webkit-text-stroke:0.25px #fff;">7/21/2021</div>
<div class="ft" style="left:8.6px;top:162.7px;font-size:14.5px;color:#fff;font-weight:400;transform:scaleX(0.9339);text-shadow:0 1px 2px rgba(0,0,0,.95),0 0 3px rgba(0,0,0,.6);">Recycle Bin</div>
</body>
</html>
